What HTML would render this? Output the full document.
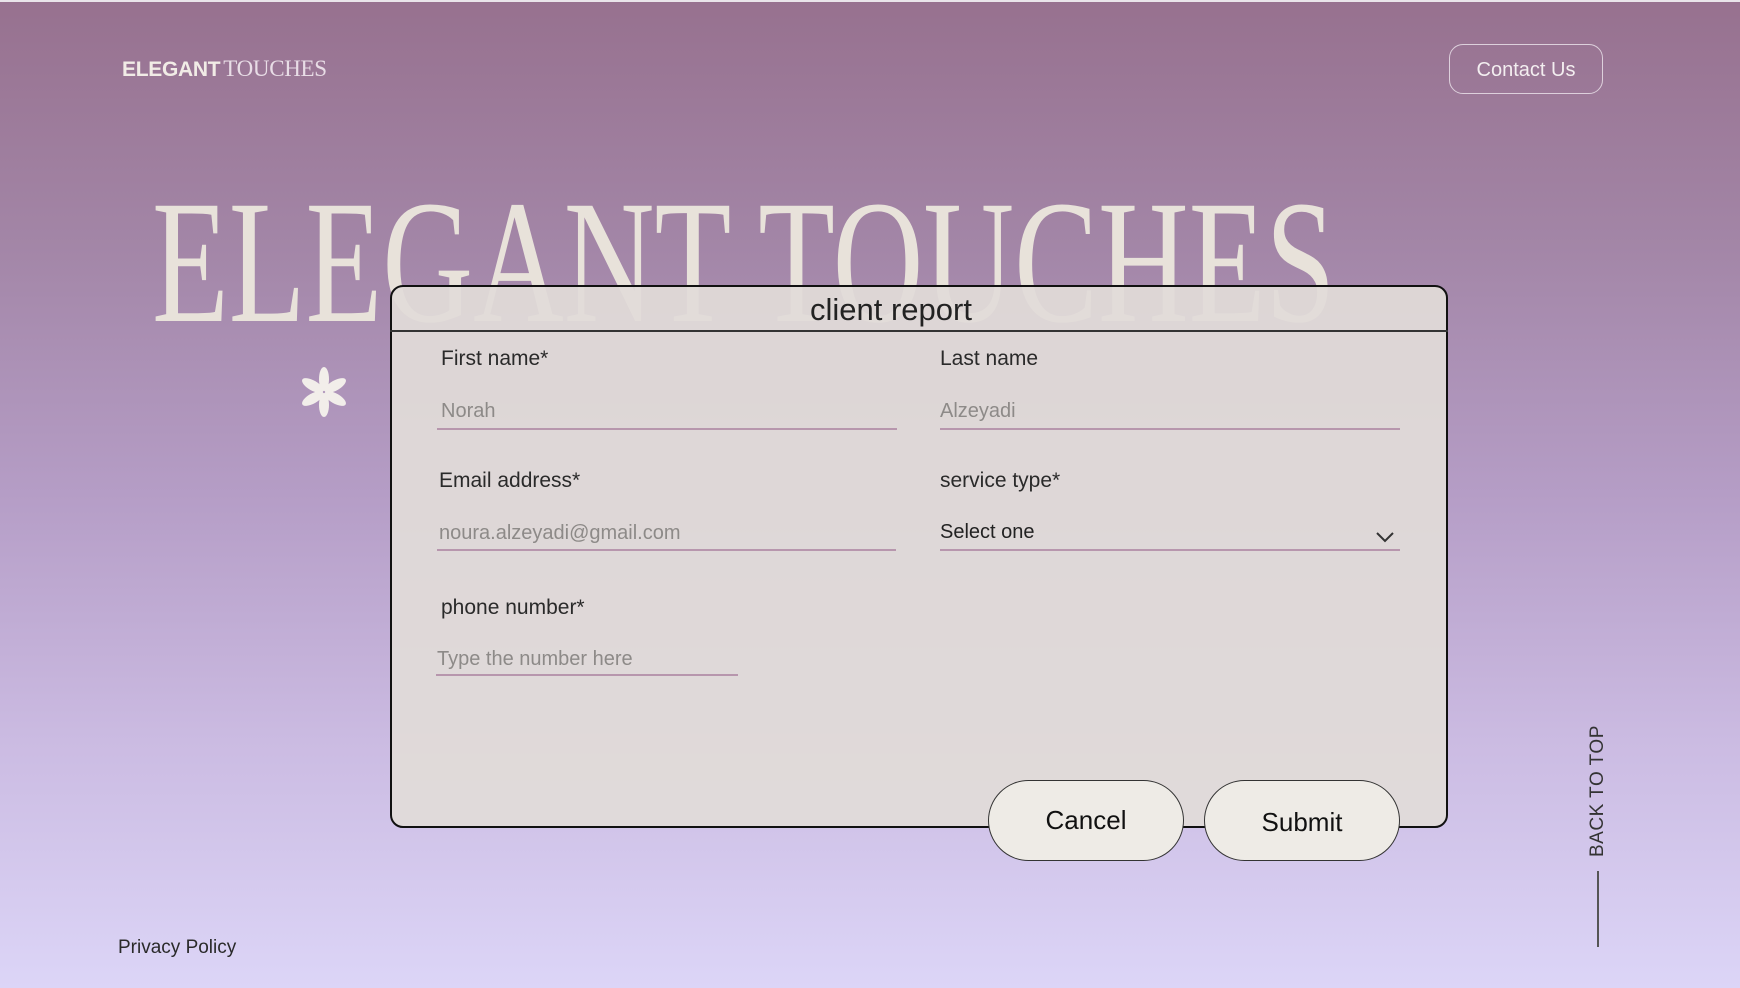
<!DOCTYPE html>
<html><head><meta charset="utf-8"><style>
*{margin:0;padding:0;box-sizing:border-box}
body{width:1740px;height:988px;overflow:hidden;position:relative;font-family:"Liberation Sans",sans-serif;
background:linear-gradient(180deg,#97718f 0%,#a386a7 25%,#b59dc6 50%,#cbbbe2 75%,#dcd5f7 100%);}
.a{position:absolute;white-space:nowrap}
.logo{left:122px;top:56px;font-size:21px;color:#f1ece6}
.logo b{font-weight:bold;letter-spacing:-0.3px;margin-right:3px}
.logo span{font-family:"Liberation Serif",serif;font-weight:normal;font-size:23px;letter-spacing:-0.3px;color:#e8dde6}
.contact{left:1449px;top:44px;width:154px;height:50px;border:1.5px solid #ddd0dc;border-radius:14px;color:#f3eef0;font-size:20px;line-height:51px;text-align:center}
.big{left:152px;top:163px;font-family:"Liberation Serif",serif;font-size:176px;line-height:200px;color:#e8e2da;transform:scaleX(0.714);transform-origin:0 0}
.card{left:390px;top:285px;width:1058px;height:543px;background:rgba(225,219,216,0.93);border:2.5px solid #111;border-radius:13px}
.hline{left:390px;top:330px;width:1058px;height:1.5px;background:#333}
.title{left:810px;top:292px;font-size:31px;color:#222}
.lab{font-size:21px;color:#2a2a2a}
.ph{font-size:20px;color:#8d8a88}
.ul{height:2px;background:#b796ad}
.btn{width:196px;height:81px;border:1.3px solid #333;border-radius:41px;background:#eeebe6;font-size:26px;color:#111;text-align:center;line-height:79px}
.btt{left:1587px;top:857px;font-size:19px;color:#333;transform:rotate(-90deg);transform-origin:0 0;letter-spacing:0.5px}
</style></head><body>
<div class="a" style="left:0;top:0;width:1740px;height:2px;background:#e9e4ea"></div>
<div class="a logo"><b>ELEGANT</b><span>TOUCHES</span></div>
<div class="a contact">Contact Us</div>
<div class="a big">ELEGANT TOUCHES</div>
<svg class="a" style="left:298px;top:366px" width="52" height="52" viewBox="0 0 52 52">
<g fill="#f2eeea"><ellipse cx="26" cy="13" rx="5" ry="12"/><ellipse cx="26" cy="39" rx="5" ry="12"/>
<ellipse cx="26" cy="13" rx="5" ry="12" transform="rotate(60 26 26)"/><ellipse cx="26" cy="39" rx="5" ry="12" transform="rotate(60 26 26)"/>
<ellipse cx="26" cy="13" rx="5" ry="12" transform="rotate(-60 26 26)"/><ellipse cx="26" cy="39" rx="5" ry="12" transform="rotate(-60 26 26)"/></g></svg>
<div class="a card"></div>
<div class="a hline"></div>
<div class="a title">client report</div>

<div class="a lab" style="left:441px;top:347px">First name*</div>
<div class="a lab" style="left:940px;top:347px">Last name</div>
<div class="a ph" style="left:441px;top:400px">Norah</div>
<div class="a ph" style="left:940px;top:400px">Alzeyadi</div>
<div class="a ul" style="left:437px;top:428px;width:460px"></div>
<div class="a ul" style="left:940px;top:428px;width:460px"></div>

<div class="a lab" style="left:439px;top:469px">Email address*</div>
<div class="a lab" style="left:940px;top:469px">service type*</div>
<div class="a ph" style="left:439px;top:522px">noura.alzeyadi@gmail.com</div>
<div class="a" style="left:940px;top:521px;font-size:20px;color:#222">Select one</div>
<svg class="a" style="left:1375px;top:530px" width="20" height="14" viewBox="0 0 20 14"><path d="M2 3 L10 11 L18 3" stroke="#333" stroke-width="2" fill="none"/></svg>
<div class="a ul" style="left:437px;top:549px;width:459px"></div>
<div class="a ul" style="left:940px;top:549px;width:460px"></div>

<div class="a lab" style="left:441px;top:596px">phone number*</div>
<div class="a ph" style="left:437px;top:648px">Type the number here</div>
<div class="a ul" style="left:436px;top:674px;width:302px"></div>

<div class="a btn" style="left:988px;top:780px">Cancel</div>
<div class="a btn" style="left:1204px;top:780px;line-height:83px">Submit</div>

<div class="a btt">BACK TO TOP</div>
<div class="a" style="left:1597px;top:871px;width:1.5px;height:76px;background:#555"></div>
<div class="a" style="left:118px;top:937px;font-size:19px;color:#2a2a2a">Privacy Policy</div>
</body></html>
